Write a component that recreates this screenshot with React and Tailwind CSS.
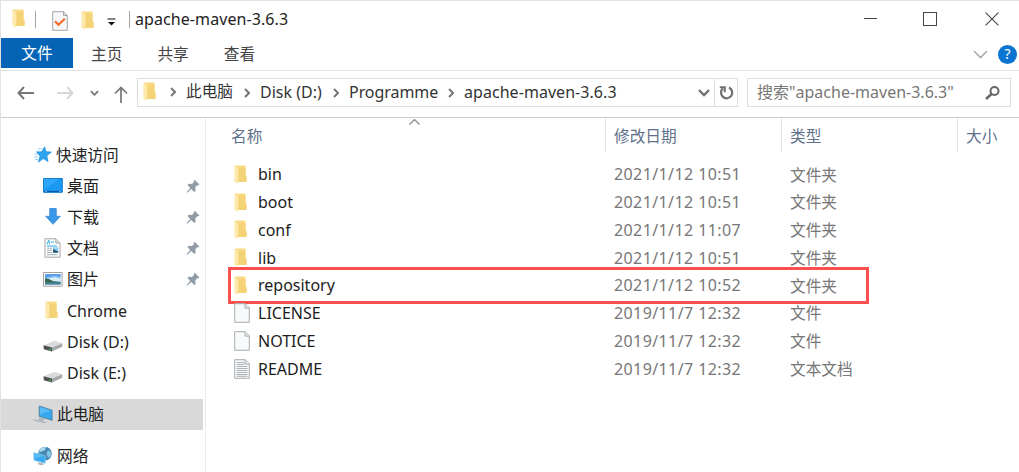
import clsx from "clsx";

const tabs = [
  { label: "主页", className: "ml-[18px]" },
  { label: "共享", className: "ml-[35px]" },
  { label: "查看", className: "ml-[35px]" },
];

const crumbs = [
  { label: "此电脑", className: "w-[47px] text-[15.7px]", gap: "w-[27px]" },
  { label: "Disk (D:)", className: "w-[62px]", gap: "w-[27px]" },
  { label: "Programme", className: "w-[89px] tracking-[-0.05px]", gap: "w-[27px]" },
  { label: "apache-maven-3.6.3", className: "w-[154px] tracking-[0.05px]", gap: "w-[26px]" },
];

const quickAccess = [
  { label: "桌面", icon: DesktopIcon, pinned: true },
  { label: "下载", icon: DownloadIcon, pinned: true },
  { label: "文档", icon: DocumentIcon, pinned: true },
  { label: "图片", icon: PictureIcon, pinned: true },
  { label: "Chrome", icon: SideFolderIcon },
  { label: "Disk (D:)", icon: DiskIcon },
  { label: "Disk (E:)", icon: DiskIcon },
];

const files = [
  { name: "bin", date: "2021/1/12 10:51", type: "文件夹", icon: FolderIcon },
  { name: "boot", date: "2021/1/12 10:51", type: "文件夹", icon: FolderIcon },
  { name: "conf", date: "2021/1/12 11:07", type: "文件夹", icon: FolderIcon },
  { name: "lib", date: "2021/1/12 10:51", type: "文件夹", icon: FolderIcon },
  { name: "repository", date: "2021/1/12 10:52", type: "文件夹", icon: FolderIcon, marked: true },
  { name: "LICENSE", date: "2019/11/7 12:32", type: "文件", icon: FileIcon },
  { name: "NOTICE", date: "2019/11/7 12:32", type: "文件", icon: FileIcon },
  { name: "README", date: "2019/11/7 12:32", type: "文本文档", icon: TextFileIcon },
];

function FolderIcon({ className }) {
  return (
    <svg className={clsx("h-[19px] w-[13px] shrink-0", className)} viewBox="0 0 13 19">
      <path d="M1 .4h10q.6 0 .6.7v9l1 1.2v5q0 .8-.8.8H2z" fill="#f8da84" />
      <path d="M5 3h6.6v7.3l1 1.2v4.8q0 .8-.8.8H4.5z" fill="#f2ce70" opacity=".7" />
      <path d="M.4.8l3.7 2.1v15.8L1 17.3q-.6-.2-.6-.7z" fill="#fde9ac" />
    </svg>
  );
}

function SideFolderIcon() {
  return <FolderIcon className="ml-[2px] -mt-px" />;
}

function FileIcon({ children }) {
  return (
    <svg className="h-[20px] w-[16px] shrink-0" viewBox="0 0 16 20">
      <path d="M.7.7h10.6l4 4v14.6H.7z" fill="#f7f9fa" stroke="#a9adaf" strokeWidth="1" />
      <path d="M11 .9v4.2h4.2" fill="#e5e8ea" stroke="#a9adaf" strokeWidth="1" />
      {children}
    </svg>
  );
}

function TextFileIcon() {
  return (
    <FileIcon>
      <path
        d="M2.5 3.5H10M2.5 5.5H10M2.5 7.5h11M2.5 9.5h11M2.5 11.5h11M2.5 13.5h11M2.5 15.5h11M2.5 17.3h11"
        stroke="#aeb2b4"
        strokeWidth="1"
      />
    </FileIcon>
  );
}

function PropertiesIcon() {
  return (
    <svg className="h-[20px] w-[16px]" viewBox="0 0 16 20">
      <path d="M.7.7h11l3.6 3.6v15H.7z" fill="#f5f7f9" stroke="#a3a7aa" />
      <path d="M11.5.9v3.6h3.6" fill="#dfe2e4" stroke="#a3a7aa" />
      <path d="M3 10.2l3.5 3.5 6.3-6" fill="none" stroke="#f26b2c" strokeWidth="2.2" />
    </svg>
  );
}

function StarIcon() {
  return (
    <svg className="h-[17px] w-[18px]" viewBox="0 0 18 17">
      <path
        d="M10.6.8l1.4 5 5.4.2-4.6 3.8 1.2 5.8-4.7-3-4.8 3.5 1.6-6-3.4-4 5.1-.4z"
        fill="#2da4ee"
        stroke="#1a8cdb"
        strokeWidth=".7"
      />
      <path d="M3.8 2.7h4M2 5.3h4M.8 8.2h3.5M.6 11h4M1 13.6h3.5" stroke="#7bc6f5" strokeWidth=".8" />
    </svg>
  );
}

function DesktopIcon() {
  return (
    <svg className="h-[15px] w-[20px]" viewBox="0 0 20 15">
      <path d="M.5.5h18.8v13.8H.5z" fill="#1a98f4" stroke="#147dcc" />
      <path d="M1 12V1h15z" fill="#37abfb" opacity=".7" />
      <path d="M1 13.5h18" stroke="#075ba0" strokeWidth="1.2" />
      <path d="M2 13.5h2M16 13.5h2" stroke="#77c7ff" strokeWidth=".8" />
    </svg>
  );
}

function DownloadIcon() {
  return (
    <svg className="ml-[2px] h-[17px] w-[16px]" viewBox="0 0 16 17">
      <path d="M4.7.5h6.6v7.8h4L8 16.3.7 8.3h4z" fill="#3b98e8" stroke="#2a83d3" strokeWidth=".7" />
    </svg>
  );
}

function DocumentIcon() {
  return (
    <svg className="ml-[1px] h-[20px] w-[17px]" viewBox="0 0 17 20">
      <path d="M1 .8h11l4 4v14.4H1z" fill="#fafcfc" stroke="#a4a7a9" />
      <path d="M11.8 1v4H16" fill="#e1e5e7" stroke="#a4a7a9" />
      <path d="M3 6.2l1.8-4 1 4M7 4h3M3 8h10" stroke="#35aee0" fill="none" />
      <path d="M3 10.2h5M3 12.3h5M3 14.5h5M3 16.7h10" stroke="#a7b1b5" />
      <path d="M9 9.2h5.2v5.5H9z" fill="#8ed2ef" />
      <path d="M9 11l5.2 2.5v1.2H9z" fill="#2b5878" />
    </svg>
  );
}

function PictureIcon() {
  return (
    <svg className="h-[15px] w-[20px]" viewBox="0 0 20 15">
      <path d="M.5.5h18.6v13.7H.5z" fill="#fff" stroke="#a0a0a0" />
      <path d="M2 2h15.6v10.6H2z" fill="#8dc6f2" />
      <path d="M2 2h15.6v3L11 4 2 6z" fill="#5b9fe9" />
      <path d="M6 6.3l6-1 5.6 1.5v2.5H8z" fill="#d9edf6" />
      <path d="M2 6.2l3.5.7 5 2.3 7.1.7v.8H2z" fill="#36674e" />
      <path d="M2 10.6h15.6v2H2z" fill="#477e9c" />
    </svg>
  );
}

function DiskIcon() {
  return (
    <svg className="mt-[8px] h-[12px] w-[20px]" viewBox="0 0 20 12">
      <path d="M.5 5.2L11.5.7l7.8 2.5L9 7.7z" fill="#d9dbdc" />
      <path d="M.5 5.2L9 7.6v4L.8 9.2z" fill="#4d5050" />
      <path d="M9 7.6l10.3-4.4v3.6L9 11.6z" fill="#a6a9aa" />
      <path d="M6.2 9.2l1.6.5" stroke="#49d354" strokeWidth="1.3" />
    </svg>
  );
}

function ComputerIcon() {
  return (
    <svg className="h-[19px] w-[20px]" viewBox="0 0 20 19">
      <path d="M6.2 1l12.9 4.2v10.1L6.2 11.4z" fill="#38a9ef" stroke="#4d7692" strokeWidth=".8" />
      <path d="M7 2l10.8 3.6L7 9.5z" fill="#70c8fa" opacity=".6" />
      <path d="M6.5 12.8l5.2 1.7-1.8 1.8-5-1.3z" fill="#a9b3ba" />
      <path d="M.3 14.2l6.2 1.2 8.8 1.4-3.5 1.8L.3 15.5z" fill="#c1c8cd" />
      <path d="M1 15l11 2.8" stroke="#8f9ba3" strokeWidth=".7" strokeDasharray="1.3 .7" />
    </svg>
  );
}

function NetworkIcon() {
  return (
    <svg className="h-[20px] w-[19px]" viewBox="0 0 19 20">
      <circle cx="12" cy="7.6" r="6.8" fill="#4686b2" />
      <path d="M7 3Q10 .3 13.4 1.3L11.2 4.7 8 5.5 6 6.7z" fill="#a8d7ea" />
      <path d="M15 4.1l3 2.2-.3 4-2.5 1.5-1.8-3.8z" fill="#83c6df" />
      <path d="M.7 6.7l11.5 3v7.5L1 14.2z" fill="#35a9f0" stroke="#8ccdf0" strokeWidth=".8" />
      <path d="M1.5 7.8l9 2.2-9 2.8z" fill="#70cbfc" opacity=".6" />
      <path d="M6 16.2l4 1 1 1.3-3 .7-3.5-1.3z" fill="#aeb7bc" />
    </svg>
  );
}

function PinIcon() {
  return (
    <svg className="h-[15px] w-[14px]" viewBox="0 0 14 15">
      <path
        d="M8.7.7l4.7 4.8-1.4 1-.8-.2-1.8 2 .1 3.6-1.3 1.1-3-3.1-3.5 3.3-1.2.5.5-1.3 3.2-3.5L1.5 6l1-1.3 3.4.2L8 3l-.2-1.1z"
        fill="#919ca7"
      />
    </svg>
  );
}

function Chevron({ className, width = 2, d = "M1 1l4 4 4-4", viewBox = "0 0 10 6" }) {
  return (
    <svg className={className} viewBox={viewBox}>
      <path d={d} fill="none" stroke="currentColor" strokeWidth={width} />
    </svg>
  );
}

function TitleBar() {
  return (
    <div className="flex h-[37px] items-center">
      <FolderIcon className="ml-[11px] -mt-[2px]" />
      <span className="ml-[10px] h-[17px] w-px bg-[#a5a5a5]" />
      <span className="ml-[16px] mt-[2px]">
        <PropertiesIcon />
      </span>
      <FolderIcon className="ml-[13px] mt-px" />
      <svg className="ml-[13px] mt-[5px] h-[8px] w-[9px]" viewBox="0 0 9 8">
        <path d="M.5 1h8" stroke="#333" strokeWidth="1.2" />
        <path d="M1 4h7L4.5 7.5z" fill="#111" />
      </svg>
      <span className="ml-[13px] h-[17px] w-px bg-[#a5a5a5]" />
      <span className="-mt-[2px] ml-[5px] text-[16px] tracking-[0.08px] text-[#222]">apache-maven-3.6.3</span>
      <div className="ml-auto mr-[20px] -mt-[2px] flex items-center text-[#444]">
        <span className="mr-[46px] h-px w-[13px] bg-[#444]" />
        <span className="mr-[48px] size-[14px] border border-[#444]" />
        <Chevron className="size-[14px]" width={1.1} viewBox="0 0 14 14" d="M.6.6l12.8 12.8M13.4.6L.6 13.4" />
      </div>
    </div>
  );
}

function RibbonTabs() {
  return (
    <div className="flex h-[33px] border-b border-[#e2e2e2] text-[15.7px] text-[#444]">
      <div className="flex h-[30px] w-[72px] items-center justify-center bg-[#0564b5] pt-px text-white">文件</div>
      {tabs.map((tab) => (
        <div key={tab.label} className={clsx("flex h-[32px] items-center pt-px", tab.className)}>
          {tab.label}
        </div>
      ))}
      <div className="ml-auto flex h-[32px] items-center">
        <Chevron className="h-[9px] w-[15px] text-[#ababab]" width={1.6} viewBox="0 0 15 9" d="M1 1l6.5 6.5L14 1" />
        <span className="ml-[10px] mr-[2px] flex size-[19px] items-center justify-center rounded-full bg-[#0874d1] text-[14px] text-white">
          ?
        </span>
      </div>
    </div>
  );
}

function AddressBar() {
  return (
    <div className="flex h-[47px] items-center border-b border-[#cdcdcd] pb-[3px] text-[#666]">
      <Chevron className="ml-[16px] h-[14px] w-[17px] text-[#777]" viewBox="0 0 17 14" d="M7 1L1.5 7 7 13M1.5 7H17" />
      <Chevron
        className="ml-[23px] h-[14px] w-[17px] text-[#d7d7d7]"
        viewBox="0 0 17 14"
        d="M10 1l5.5 6-5.5 6M0 7h15.5"
      />
      <Chevron className="ml-[16px] h-[6px] w-[9px] text-[#777]" />
      <Chevron
        className="ml-[15px] mt-[3px] h-[17px] w-[14px] text-[#777]"
        width={1.7}
        viewBox="0 0 14 17"
        d="M1 7.5l6-6 6 6M7 1.5V17"
      />
      <div className="ml-[9px] flex h-[29px] w-[601px] items-center border border-[#dedede] text-[16px] text-[#333]">
        <FolderIcon className="ml-[5px] -mt-[2px]" />
        {crumbs.map((crumb, idx) => (
          <div key={crumb.label} className={clsx("flex items-center", idx === 0 && "ml-[3px]")}>
            <span className={clsx("flex justify-center", crumb.gap)}>
              <Chevron className="h-[10px] w-[6px] text-[#777]" viewBox="0 0 6 10" d="M1 1l4 4-4 4" />
            </span>
            <span className={clsx("-mt-px whitespace-nowrap", crumb.className)}>{crumb.label}</span>
          </div>
        ))}
        <div className="ml-auto flex h-full items-center text-[#707070]">
          <Chevron className="mr-[4px] h-[8px] w-[12px]" width={2.3} viewBox="0 0 12 8" d="M1 1l5 5 5-5" />
          <span className="flex h-full w-[23px] items-center justify-center border-l border-[#dedede]">
            <svg className="h-[14px] w-[15px]" viewBox="0 0 15 14">
              <path d="M10 1.6a5.6 5.6 0 1 1-6 .8" fill="none" stroke="currentColor" strokeWidth="2.2" />
              <path d="M.8 1.2h5v5" fill="none" stroke="currentColor" strokeWidth="2" />
            </svg>
          </span>
        </div>
      </div>
      <div className="ml-[9px] flex h-[29px] w-[264px] items-center border border-[#dedede] text-[16px] text-[#777]">
        <span className="-mt-px ml-[9px] whitespace-nowrap">搜索"apache-maven-3.6.3"</span>
        <svg className="ml-auto mr-[10px] h-[14px] w-[15px]" viewBox="0 0 15 14">
          <circle cx="9.5" cy="5" r="4" fill="none" stroke="#666" strokeWidth="2" />
          <path d="M6.5 8L1 13" stroke="#666" strokeWidth="2.5" />
        </svg>
      </div>
    </div>
  );
}

function Sidebar() {
  return (
    <nav className="w-[205px] shrink-0 border-r border-[#ececec] pt-[21px] text-[16px] text-[#222]">
      <div className="flex h-[31.2px] items-center pl-[33px]">
        <StarIcon />
        <span className="ml-[4px] pt-[2px] text-[15.7px]">快速访问</span>
      </div>
      {quickAccess.map((item) => {
        const Icon = item.icon;
        return (
          <div key={item.label} className="flex h-[31.2px] items-center pl-[42px]">
            <span className="w-[24px]">
              <Icon />
            </span>
            <span>{item.label}</span>
            {item.pinned ? (
              <span className="ml-auto mr-[5px] mt-px">
                <PinIcon />
              </span>
            ) : null}
          </div>
        );
      })}
      <div className="mt-[10px] mr-[2px] flex h-[31px] items-center bg-[#d9d9d9] pl-[32px]">
        <ComputerIcon />
        <span className="ml-[4px] pt-[2px] text-[15.7px]">此电脑</span>
      </div>
      <div className="mt-[10px] flex h-[31px] items-center pl-[32px]">
        <span className="mt-[2px]">
          <NetworkIcon />
        </span>
        <span className="ml-[5px] pt-[3px] text-[15.7px]">网络</span>
      </div>
    </nav>
  );
}

function FileList() {
  return (
    <main className="flex-1">
      <div className="relative flex h-[34px] items-center text-[15.7px] text-[#5f718a]">
        <span className="flex h-full w-[400px] items-center border-r border-[#e5e5e5] pl-[25px] pt-[3px]">名称</span>
        <span className="flex h-full w-[176px] items-center border-r border-[#e5e5e5] pl-[8px] pt-[3px]">修改日期</span>
        <span className="flex h-full w-[176px] items-center border-r border-[#e5e5e5] pl-[8px] pt-[3px]">类型</span>
        <span className="pl-[8px] pt-[3px]">大小</span>
        <Chevron
          className="absolute left-[203px] top-px h-[6px] w-[11px] text-[#888]"
          width={1.2}
          viewBox="0 0 11 6"
          d="M.5 5.5l5-5 5 5"
        />
      </div>
      <div className="pt-[8.5px]">
        {files.map((file) => {
          const Icon = file.icon;
          return (
            <div key={file.name} className="relative flex h-[27.75px] items-center text-[16px]">
              <span className="flex w-[52px] pl-[28px]">
                <Icon />
              </span>
              <span className="w-[356px] text-[#1c1c1c]">{file.name}</span>
              <span className="w-[176px] tracking-[0.4px] text-[#777]">{file.date}</span>
              <span className="pt-[2px] text-[15.7px] text-[#777]">{file.type}</span>
              {file.marked ? (
                <span className="absolute left-[22px] -top-[4.5px] h-[37px] w-[641px] border-[3px] border-[#fb4f4f]" />
              ) : null}
            </div>
          );
        })}
      </div>
    </main>
  );
}

export default function App() {
  return (
    <div className="flex h-[472px] w-[1019px] flex-col overflow-hidden border-l border-t border-[#e2e2e2] bg-white font-['Noto_Sans','Noto_Sans_CJK_SC',sans-serif] leading-none">
      <TitleBar />
      <RibbonTabs />
      <AddressBar />
      <div className="flex min-h-0 flex-1">
        <Sidebar />
        <FileList />
      </div>
    </div>
  );
}
